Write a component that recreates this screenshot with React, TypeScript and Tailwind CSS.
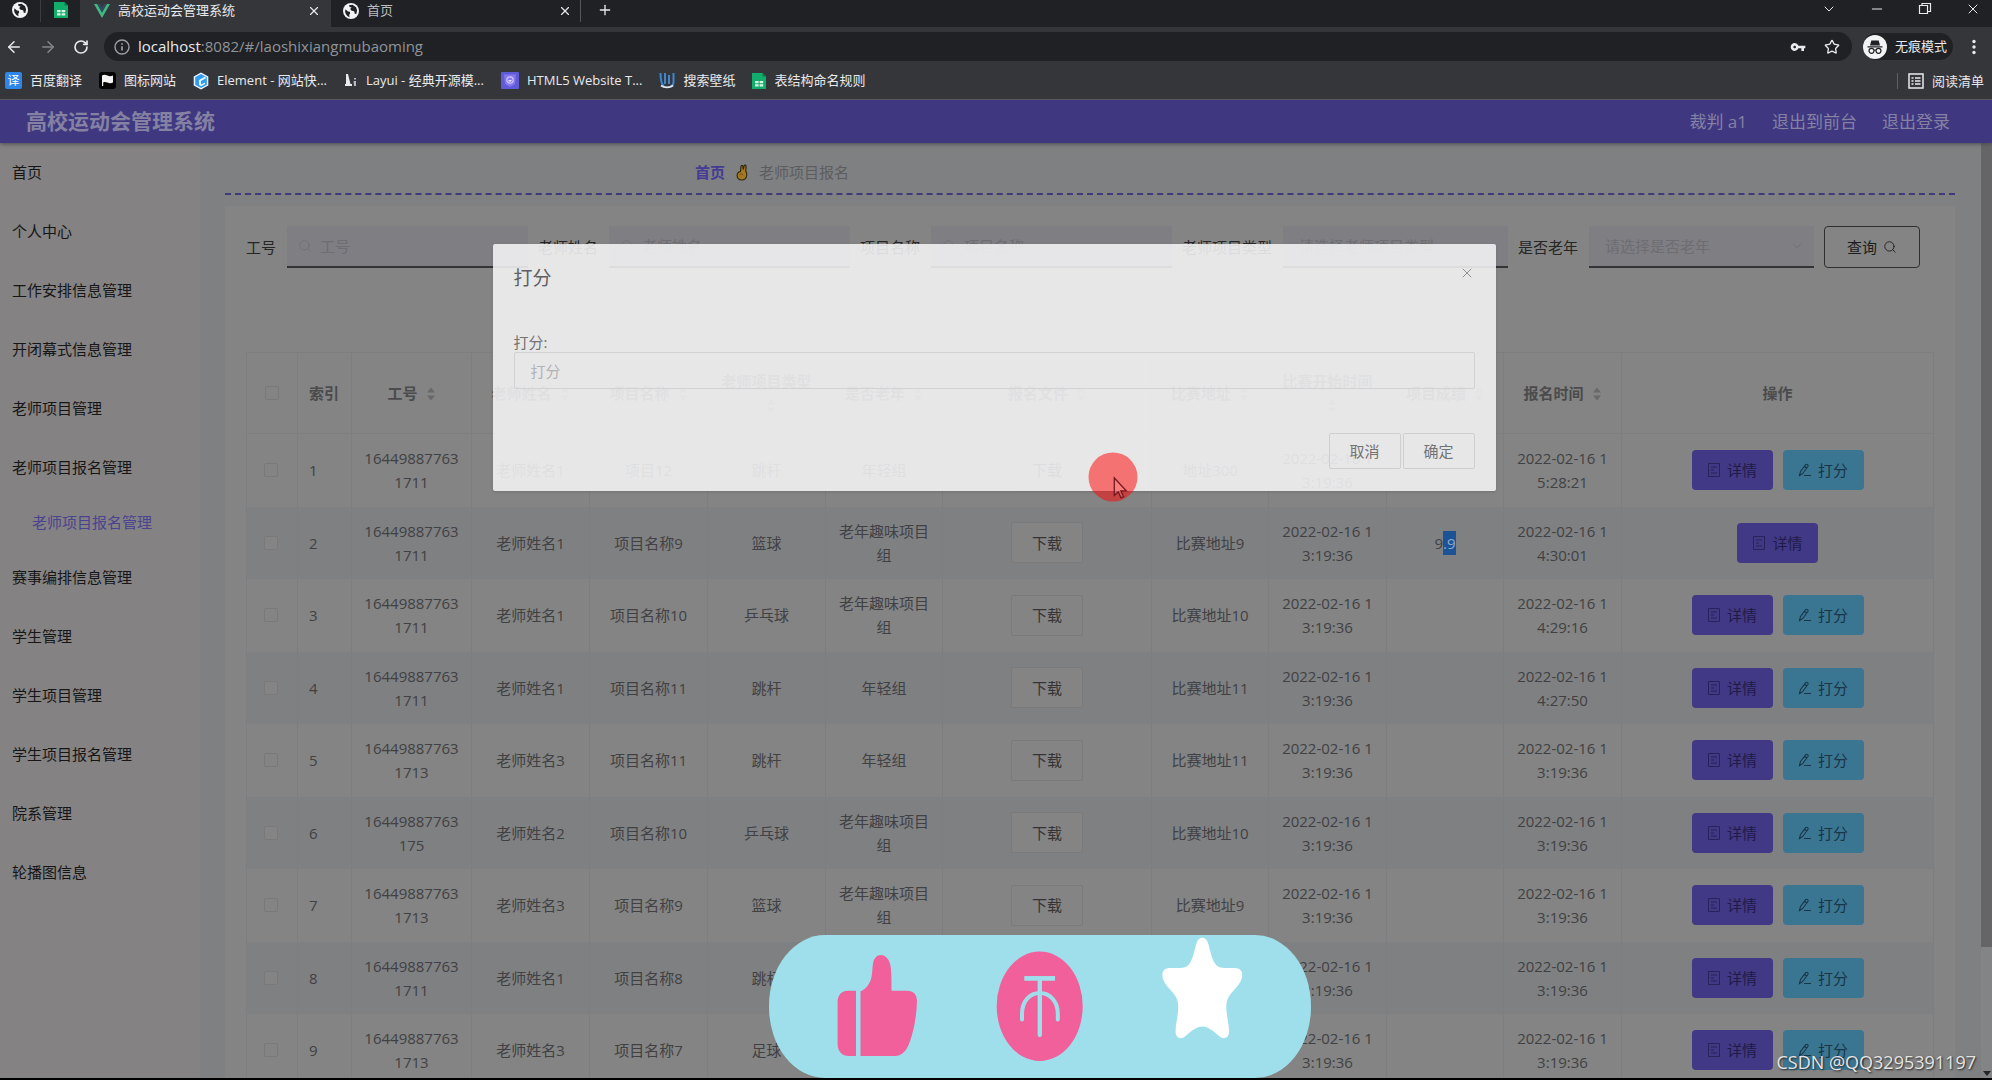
import { useState, type ReactNode } from "react";
import clsx from "clsx";
import {
  ArrowLeft,
  ArrowRight,
  ChevronDown,
  Minus,
  Plus,
  RotateCw,
  Search,
  Star,
  X,
} from "lucide-react";
import { MdVpnKey } from "react-icons/md";

interface Entry {
  jobNo: string;
  teacher: string;
  project: string;
  type: string;
  group: string;
  address: string;
  score?: string;
  signedAt: string;
}

const START_TIME = "2022-02-16 13:19:36";

const entries: Entry[] = [
  { jobNo: "164498877631711", teacher: "老师姓名1", project: "项目12", type: "跳杆", group: "年轻组", address: "地址300", signedAt: "2022-02-16 15:28:21" },
  { jobNo: "164498877631711", teacher: "老师姓名1", project: "项目名称9", type: "篮球", group: "老年趣味项目组", address: "比赛地址9", score: "9.9", signedAt: "2022-02-16 14:30:01" },
  { jobNo: "164498877631711", teacher: "老师姓名1", project: "项目名称10", type: "乒乓球", group: "老年趣味项目组", address: "比赛地址10", signedAt: "2022-02-16 14:29:16" },
  { jobNo: "164498877631711", teacher: "老师姓名1", project: "项目名称11", type: "跳杆", group: "年轻组", address: "比赛地址11", signedAt: "2022-02-16 14:27:50" },
  { jobNo: "164498877631713", teacher: "老师姓名3", project: "项目名称11", type: "跳杆", group: "年轻组", address: "比赛地址11", signedAt: START_TIME },
  { jobNo: "16449887763175", teacher: "老师姓名2", project: "项目名称10", type: "乒乓球", group: "老年趣味项目组", address: "比赛地址10", signedAt: START_TIME },
  { jobNo: "164498877631713", teacher: "老师姓名3", project: "项目名称9", type: "篮球", group: "老年趣味项目组", address: "比赛地址9", signedAt: START_TIME },
  { jobNo: "164498877631711", teacher: "老师姓名1", project: "项目名称8", type: "跳杆", group: "年轻组", address: "比赛地址8", signedAt: START_TIME },
  { jobNo: "164498877631713", teacher: "老师姓名3", project: "项目名称7", type: "足球", group: "年轻组", address: "比赛地址7", signedAt: START_TIME },
];

const menu = [
  { label: "首页" },
  { label: "个人中心" },
  { label: "工作安排信息管理" },
  { label: "开闭幕式信息管理" },
  { label: "老师项目管理" },
  { label: "老师项目报名管理", child: "老师项目报名管理" },
  { label: "赛事编排信息管理" },
  { label: "学生管理" },
  { label: "学生项目管理" },
  { label: "学生项目报名管理" },
  { label: "院系管理" },
  { label: "轮播图信息" },
];

/* ---------- icons ---------- */

const GlobeIcon = () => (
  <svg viewBox="0 0 16 16" className="size-4 shrink-0">
    <circle cx="8" cy="8" r="8" fill="#f1f3f4" />
    <path d="M2.4 6.2 5 8.6l1.8.2.4 1.8-1 1.2.3 2.5A6.6 6.6 0 0 1 2.4 6.2Z" fill="#202124" />
    <path d="M6 2.2 9.5 1.8l3.6 2.4 1 3.2-.8 3.6-1.6-.2-.5-2.6-2.6-.4-1.5-1.9 1.5-1.5-2-.4Z" fill="#202124" />
  </svg>
);

const SheetIcon = () => (
  <svg viewBox="0 0 14 16" className="h-4 w-3.5 shrink-0">
    <path d="M0 0h10.5L14 3.5V16H0Z" fill="#12ad6b" />
    <path d="M10.5 0 14 3.5h-3.5Z" fill="#0b7d4c" />
    <path d="M3 8h3.6v2.2H3ZM7.6 8h3.6v2.2H7.6ZM3 11.2h3.6v2.2H3ZM7.6 11.2h3.6v2.2H7.6Z" fill="#d8f5e6" />
  </svg>
);

const VueIcon = () => (
  <svg viewBox="0 0 16 14" className="h-3.5 w-4 shrink-0">
    <path d="M0 0h3.2L8 8.6 12.8 0H16L8 14Z" fill="#41b883" />
    <path d="M3.2 0h2.9L8 3.4 9.9 0h2.9L8 8.6Z" fill="#34495e" />
  </svg>
);

const TranslateIcon = () => (
  <span className="flex size-[17px] items-center justify-center rounded-xs bg-[#2d86e8] text-[12px] leading-none text-white">
    译
  </span>
);

const FlagIcon = () => (
  <svg viewBox="0 0 17 17" className="size-[17px]">
    <rect width="17" height="17" rx="3" fill="#050505" />
    <path d="M3 3.5c2-1.2 3.5-.8 5.4.1s3.7.9 5.6-.1v7c-1.9 1-3.7.9-5.6.1s-2.9-.7-4.2-.2V14H3Z" fill="#f3f3f3" />
  </svg>
);

const ElementIcon = () => (
  <svg viewBox="0 0 16 18" className="h-[18px] w-4">
    <path d="M8 .5 15.3 4.6v8.8L8 17.5.7 13.4V4.6Z" fill="#e8f4ff" />
    <path d="M8 2 13.8 5.3v7.4L8 16 2.2 12.7V5.3Z" fill="#2e9bf5" />
    <path d="M13 6.2 8 9v3.6l4-2.2V12l-4 2.3-2-1.2V8l6-3.4Z" fill="#e8f4ff" />
  </svg>
);

const LayuiIcon = () => (
  <svg viewBox="0 0 14 15" className="h-[15px] w-3.5">
    <path d="M2 1h2l2.5 10H8v2H1v-2h1Z" fill="#e8eaed" />
    <path d="M10 5h2v1.6h-2ZM9.5 8H12v5h-2Z" fill="#b6b9bd" />
  </svg>
);

const ShieldIcon = () => (
  <svg viewBox="0 0 18 17" className="h-[17px] w-[18px]">
    <rect width="18" height="17" rx="1" fill="#5f5ad8" />
    <path d="M3 2.5h12l-1 9.5-5 3-5-3Z" fill="#8677ee" />
    <circle cx="9" cy="8" r="3.2" fill="none" stroke="#cfc8ff" strokeWidth="1.2" />
    <path d="M7.3 8a1.7 1.7 0 0 0 3.4 0Z" fill="#e6e2ff" />
  </svg>
);

const WallpaperIcon = () => (
  <svg viewBox="0 0 16 17" className="h-[17px] w-4" fill="none">
    <path d="M1.5 1c0 7 .5 11 3.5 13M6 1v11M10 3v9M14.5 1v9c0 2-1 4-3 4" stroke="#3f86cf" strokeWidth="2" />
    <path d="M2 13.5c3 2.5 9 2.5 12 0" stroke="#dbe9f7" strokeWidth="1.8" />
  </svg>
);

const IncognitoIcon = () => (
  <svg viewBox="0 0 24 24" className="size-6 shrink-0">
    <circle cx="12" cy="12" r="12" fill="#f1f3f4" />
    <path d="M8.3 5.500h7.4l1.3 5H7ZM4.5 11.300h15v1.3h-15Z" fill="#202124" />
    <circle cx="8.5" cy="15.8" r="2.5" fill="none" stroke="#202124" strokeWidth="1.2" />
    <circle cx="15.5" cy="15.8" r="2.5" fill="none" stroke="#202124" strokeWidth="1.2" />
    <path d="M11 15.300q1-.7 2 0" fill="none" stroke="#202124" />
  </svg>
);

const ReadingListIcon = () => (
  <svg viewBox="0 0 16 16" className="size-4" fill="none" stroke="#e8eaed" strokeWidth="1.5">
    <rect x="1" y="1" width="14" height="14" />
    <path d="M3.5 5h2M7 5h5.5M3.5 8h2M7 8h5.5M3.5 11h2M7 11h5.5" />
  </svg>
);

const VictoryIcon = () => (
  <svg viewBox="0 0 12 17" className="h-[17px] w-3">
    <path
      d="M4.500 7.5 5 2.400c.2-1.200 1.800-1.200 2 0L7.200 5.500l1-3.800c.5-1.100 2.100-.6 1.900.6L9.800 7.5c1.200.9 1.200 2.100.9 4-.4 2.600-1.900 4.500-4.700 4.500-3 0-4.700-1.600-4.900-4.300C1 9.500 2.300 7.900 4.500 7.500Z"
      fill="#a5771f"
      stroke="#2c2412"
      strokeWidth="1.1"
    />
    <path d="M3.5 10.5c1.5-.9 2.7-.7 3.400.8" fill="none" stroke="#5a4212" strokeWidth=".8" />
  </svg>
);

const SortIcon = () => (
  <svg viewBox="0 0 10 14" className="ml-2 inline-block h-3.5 w-2.5 align-[-2px]">
    <path d="M5 .5 9 5.500H1ZM5 13.500 1 8.500h8Z" fill="#69696b" />
  </svg>
);

const DetailIcon = () => (
  <svg viewBox="0 0 14 14" className="size-3.5 opacity-70" fill="none" stroke="currentColor">
    <path d="M1.5.5h11v13h-11ZM4 4h6M4 7h3M4 10h6" />
  </svg>
);

const EditIcon = () => (
  <svg viewBox="0 0 14 14" className="size-3.5" fill="none" stroke="currentColor" strokeWidth="1.1">
    <path d="M2.500 8.500 7.700 1.600c1-1 3 .4 2.300 1.700L4.600 10.700 1.500 12.500ZM6.500 3.200 8.800 5M6 12.500h7" />
  </svg>
);

/* ---------- browser chrome ---------- */

const bookmarks: { icon: ReactNode; label: string }[] = [
  { icon: <TranslateIcon />, label: "百度翻译" },
  { icon: <FlagIcon />, label: "图标网站" },
  { icon: <ElementIcon />, label: "Element - 网站快..." },
  { icon: <LayuiIcon />, label: "Layui - 经典开源模..." },
  { icon: <ShieldIcon />, label: "HTML5 Website T..." },
  { icon: <WallpaperIcon />, label: "搜索壁纸" },
  { icon: <SheetIcon />, label: "表结构命名规则" },
];

const BrowserChrome = () => (
  <div className="shrink-0 text-[13px] text-[#e8eaed]">
    <div className="flex h-[27px] bg-[#202124]">
      <div className="flex w-10 justify-center pt-[2px]">
        <GlobeIcon />
      </div>
      <div className="h-[22px] w-px bg-[#3c3d41]" />
      <div className="flex w-[39px] justify-center pt-[2px]">
        <SheetIcon />
      </div>
      <div className="flex h-full w-[251px] items-center gap-2 bg-[#35363a] pr-2.5 pb-[6px] pl-3.5">
        <VueIcon />
        <span className="flex-1">高校运动会管理系统</span>
        <button aria-label="关闭标签页">
          <X className="size-3.5" />
        </button>
      </div>
      <div className="flex h-full w-[249px] items-center gap-2 pr-2 pb-[6px] pl-3">
        <GlobeIcon />
        <span className="flex-1 text-[#b9bcc1]">首页</span>
        <button aria-label="关闭标签页">
          <X className="size-3.5" />
        </button>
      </div>
      <div className="h-[22px] w-px bg-[#55565a]" />
      <button aria-label="新标签页" className="flex w-12 justify-center pt-[2px]">
        <Plus className="size-4" />
      </button>
      <div className="ml-auto flex h-full items-start gap-8 pt-px pr-[11px]">
        <ChevronDown className="size-4" strokeWidth={1.5} />
        <Minus className="size-4" strokeWidth={1.5} />
        <svg viewBox="0 0 16 16" className="size-4" fill="none" stroke="currentColor" strokeWidth="1.2">
          <path d="M2.5 4.5h8v8h-8ZM5 4.5V2.5h8.5v8h-3" />
        </svg>
        <X className="size-4" strokeWidth={1.5} />
      </div>
    </div>

    <div className="flex h-[39px] items-center bg-[#35363a]">
      <button aria-label="后退" className="flex w-[27px] justify-center">
        <ArrowLeft className="size-[18px]" />
      </button>
      <button aria-label="前进" className="ml-[7px] flex w-[27px] justify-center text-[#85878b]">
        <ArrowRight className="size-[18px]" />
      </button>
      <button aria-label="刷新" className="ml-[7px] flex w-[26px] justify-center">
        <RotateCw className="size-4" strokeWidth={2.5} />
      </button>
      <div className="ml-[10px] flex h-[29px] flex-1 items-center rounded-full bg-[#202124] pr-3 pl-2.5">
        <svg viewBox="0 0 16 16" className="size-4" fill="none" stroke="#9aa0a6" strokeWidth="1.4">
          <circle cx="8" cy="8" r="7" />
          <path d="M8 7.2v4.3M8 4.3v1.5" strokeWidth="1.7" />
        </svg>
        <span className="ml-2 flex-1 text-[15px] text-[#8f949a]">
          <span className="text-[#e8eaed]">localhost</span>:8082/#/laoshixiangmubaoming
        </span>
        <MdVpnKey className="size-4" />
        <Star className="ml-[18px] size-4" />
      </div>
      <div className="ml-[11px] flex h-[27px] items-center gap-2 rounded-full bg-[#202124] pr-1.5">
        <IncognitoIcon />
        无痕模式
      </div>
      <svg viewBox="0 0 4 16" className="mr-4 ml-[19px] h-4 w-1" fill="#e8eaed">
        <circle cx="2" cy="2.5" r="1.7" />
        <circle cx="2" cy="8" r="1.7" />
        <circle cx="2" cy="13.5" r="1.7" />
      </svg>
    </div>

    <div className="flex h-[34px] items-center justify-between border-b border-[#5a5b66] bg-[#35363a] pr-2 pb-1 pl-[5px] text-[13px]">
      <div className="flex items-center gap-[17px]">
        {bookmarks.map((b) => (
          <a key={b.label} href="#" className="flex items-center gap-2 whitespace-nowrap">
            {b.icon}
            {b.label}
          </a>
        ))}
      </div>
      <a href="#" className="flex items-center gap-2 border-l border-[#5f6063] pl-2.5 leading-4">
        <ReadingListIcon />
        阅读清单
      </a>
    </div>
  </div>
);

/* ---------- page ---------- */

const Sidebar = () => (
  <nav className="w-[200px] shrink-0 bg-[#848283] text-[15px] text-[#161616]">
    {menu.map((m) => (
      <div key={m.label}>
        <a href="#" className="flex h-[59px] items-center pl-3">
          {m.label}
        </a>
        {m.child && (
          <a href="#" className="flex h-[51px] items-center pl-8 text-[#4a4390]">
            {m.child}
          </a>
        )}
      </div>
    ))}
  </nav>
);

interface FilterProps {
  label: string;
  hint?: string;
  className: string;
}

const fieldClass = "flex h-[42px] min-w-0 flex-1 items-center border-b-2 border-[#343436] bg-[#7f7e83]";

const TextFilter = ({ label, className }: FilterProps) => (
  <label className={clsx("flex items-center gap-[11px]", className)}>
    <span className="shrink-0">{label}</span>
    <span className={clsx(fieldClass, "pl-[11px]")}>
      <Search className="size-3.5 shrink-0 text-[#707075]" strokeWidth={1.5} />
      <input placeholder={label} className="ml-2 w-full min-w-0 outline-none placeholder:text-[#6d6d72]" />
    </span>
  </label>
);

const SelectFilter = ({ label, hint, className }: FilterProps) => (
  <label className={clsx("flex items-center gap-[11px]", className)}>
    <span className="shrink-0">{label}</span>
    <span className={clsx(fieldClass, "pr-2.5 pl-4")}>
      <select className="w-full min-w-0 appearance-none text-[#6d6d72] outline-none">
        <option>{hint}</option>
      </select>
      <ChevronDown className="size-3.5 shrink-0 text-[#6d6d72]" strokeWidth={1.5} />
    </span>
  </label>
);

const Filters = () => (
  <form className="flex items-center gap-2.5 text-[15px] text-[#262626]">
    <TextFilter label="工号" className="flex-[282]" />
    <TextFilter label="老师姓名" className="flex-[312]" />
    <TextFilter label="项目名称" className="flex-[312]" />
    <SelectFilter label="老师项目类型" hint="请选择老师项目类型" className="flex-[326]" />
    <SelectFilter label="是否老年" hint="请选择是否老年" className="flex-[296]" />
    <button
      type="button"
      className="flex h-[42px] w-24 shrink-0 items-center justify-center gap-1.5 rounded border border-[#2f2f2f] text-[#1c1c1c]"
    >
      查询
      <Search className="size-3.5" strokeWidth={1.5} />
    </button>
  </form>
);

const headers = ["工号", "老师姓名", "项目名称", "老师项目类型", "是否老年", "报名文件", "比赛地址", "比赛开始时间", "项目成绩", "报名时间"];

const checkboxClass = "block size-3.5 appearance-none rounded-xs border border-[#79797b] bg-[#848484]";
const cellClass = "border-r border-[#7e7e80] px-2.5 break-all";

const EntryTable = () => (
  <table className="w-full table-fixed border-l border-[#7e7e80] text-center text-[15px] leading-6 text-[#414144]">
    <colgroup>
      <col className="w-[51px]" />
      <col className="w-[54px]" />
      <col className="w-[120px]" />
      <col className="w-[118px]" />
      <col className="w-[118px]" />
      <col className="w-[118px]" />
      <col className="w-[117px]" />
      <col className="w-[209px]" />
      <col className="w-[117px]" />
      <col className="w-[118px]" />
      <col className="w-[117px]" />
      <col className="w-[118px]" />
      <col />
    </colgroup>
    <thead>
      <tr className="h-[81px] border-y border-[#7e7e80] text-[#4b4b4d]">
        <th className="border-r border-[#7e7e80] pl-[18px]">
          <input type="checkbox" aria-label="全选" className={checkboxClass} />
        </th>
        <th className="border-r border-[#7e7e80] pl-[11px] text-left font-semibold">索引</th>
        {headers.map((h) => (
          <th key={h} className="border-r border-[#7e7e80] px-2.5 font-semibold">
            {h}
            <SortIcon />
          </th>
        ))}
        <th className="border-r border-[#7e7e80] font-semibold">操作</th>
      </tr>
    </thead>
    <tbody>
      {entries.map((e, i) => (
        <tr key={i} className="odd:h-[73px] even:h-[72px] even:bg-[#7f8082]">
          <td className="border-r border-[#7e7e80] pl-[17px]">
            <input type="checkbox" aria-label={`选择第${i + 1}行`} className={checkboxClass} />
          </td>
          <td className="border-r border-[#7e7e80] pl-[11px] text-left">{i + 1}</td>
          <td className={cellClass}>{e.jobNo}</td>
          <td className={cellClass}>{e.teacher}</td>
          <td className={cellClass}>{e.project}</td>
          <td className={cellClass}>{e.type}</td>
          <td className={cellClass}>{e.group}</td>
          <td className={cellClass}>
            <button className="h-[41px] w-[72px] rounded-xs border border-[#7a7a7b] bg-[#848484] text-[#343436]">
              下载
            </button>
          </td>
          <td className={cellClass}>{e.address}</td>
          <td className={cellClass}>{START_TIME}</td>
          <td className={cellClass}>
            {e.score && (
              <>
                {e.score.slice(0, 1)}
                <span className="inline-block bg-[#1c5396] text-[#8fa9c9]">{e.score.slice(1)}</span>
              </>
            )}
          </td>
          <td className={cellClass}>{e.signedAt}</td>
          <td className="border-r border-[#7e7e80]">
            <div className="flex justify-center gap-2.5">
              <button className="flex h-10 w-[81px] items-center justify-center gap-1.5 rounded bg-[#413985] text-[#1f1b48]">
                <DetailIcon />
                详情
              </button>
              {!e.score && (
                <button className="flex h-10 w-[81px] items-center justify-center gap-1.5 rounded bg-[#3a7592] text-[#173648]">
                  <EditIcon />
                  打分
                </button>
              )}
            </div>
          </td>
        </tr>
      ))}
    </tbody>
  </table>
);

const ScoreDialog = ({ onClose }: { onClose: () => void }) => (
  <div className="absolute inset-x-0 top-[244px] flex justify-center pr-1">
    <div
      role="dialog"
      aria-label="打分"
      className="w-[1003px] max-w-full rounded-xs bg-[#f5f5f6]/88 px-[21px] pt-5 pb-[22px] text-[15px] text-[#737375] shadow"
    >
      <div className="flex h-7 items-start justify-between">
        <h2 className="text-[19px] leading-7 text-[#5f5f61]">打分</h2>
        <button aria-label="关闭" onClick={onClose} className="pt-px text-[#929294]">
          <X className="size-4" strokeWidth={1.5} />
        </button>
      </div>
      <label className="mt-[41px] block leading-[19px]">
        打分:
        <input
          placeholder="打分"
          className="block h-[37px] w-full rounded-xs border border-[#d2d2d4] px-4 outline-none placeholder:text-[#b3b3b6]"
        />
      </label>
      <div className="mt-11 flex justify-end gap-[2px]">
        <button onClick={onClose} className="h-9 w-[72px] rounded-xs border border-[#cfcfd2]">
          取消
        </button>
        <button onClick={onClose} className="h-9 w-[72px] rounded-xs border border-[#cfcfd2]">
          确定
        </button>
      </div>
    </div>
  </div>
);

/* ---------- things floating above the window ---------- */

const ClickMarker = () => (
  <svg viewBox="0 0 50 50" className="pointer-events-none absolute top-[452px] left-[1088px] size-[50px]">
    <circle cx="25" cy="25" r="24.5" fill="rgba(255,10,10,.53)" />
    <path
      d="M26.3 26v17.5l3.9-3.7 2.8 6 2.6-1.2-2.7-5.8h5.4Z"
      fill="rgba(255,150,150,.35)"
      stroke="#76171c"
      strokeWidth="1.3"
    />
  </svg>
);

const LikeBanner = () => (
  <div className="absolute bottom-[2px] left-[769px] h-[143px] w-[542px] rounded-[56px/71px] bg-[#9edfeb]">
    <svg viewBox="0 0 542 143" className="size-full">
      <g fill="#f1609a">
        <path d="M87 55.700H79C72.500 55.700 68.600 60 68.600 67v42c0 7.500 4.500 12 11 12H87Z" />
        <path d="M91.500 121V56.500c6-3 9.500-7.500 11-14.500 1-5 .8-9.500 1.500-13.500 1-5.500 4-8.500 7.800-8.500s7.500 3 9.200 8.500c1.500 5.500 1.500 16 1.500 27.200H138c6.500 0 10 4 10 10.500-.5 15-3 29-7 40-3 9-8 14.800-15 14.800Z" />
        <ellipse cx="270.700" cy="71.300" rx="43" ry="54.700" />
      </g>
      <g fill="none" stroke="#9edfeb">
        <path d="M255.300 43.400h30.700" strokeWidth="4.700" />
        <path d="M270.800 44v56" strokeWidth="4.300" strokeLinecap="round" />
        <path d="M253 84.500V79c0-13 8-21 17.800-21s18 8 18 21v5.500" strokeWidth="4" strokeLinecap="round" />
      </g>
      <path
        d="M433.300 2.700c3 0 5 2.500 6.300 7 2 8 3.500 14.500 6.300 18.500 2.500 4 6 4.800 11 4.800h8c5 0 8.300 2 8.300 6.500 0 6-3.200 10-7.200 14.500-5 5.500-8.500 9.500-8.700 17 0 10 2.700 17 2.700 25.500 0 7-5.500 8.500-10 4.500-5.500-5-11-9.500-16.700-9.500s-11.200 4.500-16.700 9.500c-4.500 4-10 2.500-10-4.500 0-8.500 2.700-15.500 2.700-25.500-.2-7.500-3.700-11.500-8.700-17-4-4.500-7.200-8.500-7.200-14.500 0-4.500 3.300-6.500 8.300-6.500h8c5 0 8.500-.8 11-4.800 2.800-4 4.300-10.500 6.300-18.500 1.300-4.500 3.300-7 6.300-7Z"
        fill="#fff"
      />
    </svg>
  </div>
);

const App = () => {
  const [dialogOpen, setDialogOpen] = useState(true);

  return (
    <div
      className={clsx(
        "relative flex h-screen flex-col overflow-hidden bg-black pb-[2px]",
        "font-['Open_Sans','Noto_Sans_CJK_SC',sans-serif]",
      )}
    >
      <BrowserChrome />

      <header className="z-10 flex h-[43px] shrink-0 items-center bg-[#3f3881] pr-[42px] pl-[26px] text-[17px] text-[#8581a3] shadow-[0_1px_4px_#4b4b50]">
        <h1 className="flex-1 text-[21px] font-bold">高校运动会管理系统</h1>
        <div className="flex gap-[25px]">
          <span>裁判 a1</span>
          <a href="#">退出到前台</a>
          <a href="#">退出登录</a>
        </div>
      </header>

      <div className="flex min-h-0 flex-1 bg-[#7f8082]">
        <Sidebar />
        <main className="min-w-0 flex-1 overflow-hidden pr-[26px] pl-[25px]">
          <div className="flex h-[52px] items-center gap-[11px] border-b-2 border-dashed border-[#3f3a78] pt-2 pl-[470px] text-[15px] text-[#5d5d5f]">
            <a href="#" className="font-semibold text-[#443c94]">
              首页
            </a>
            <VictoryIcon />
            <span>老师项目报名</span>
          </div>
          <div className="mt-[11px] bg-[#838483] pt-5 pr-[21px] pl-[21px]">
            <div className="pr-3.5">
              <Filters />
            </div>
            <div className="mt-[84px]">
              <EntryTable />
            </div>
          </div>
        </main>
        <div className="flex w-[11px] shrink-0 flex-col justify-between bg-[#838486]">
          <div className="h-[86%] bg-[#656568]" />
          <svg viewBox="0 0 11 8" className="h-2 w-[11px]">
            <path d="M2 1h8L6 6Z" fill="#252525" />
          </svg>
        </div>
      </div>

      {dialogOpen && <ScoreDialog onClose={() => setDialogOpen(false)} />}
      <ClickMarker />
      <LikeBanner />
      <span className="absolute right-4 bottom-1 text-[18px] leading-7 text-[#e4e4e4] [text-shadow:1px_1px_2px_#222]">
        CSDN @QQ3295391197
      </span>
    </div>
  );
};

export default App;
